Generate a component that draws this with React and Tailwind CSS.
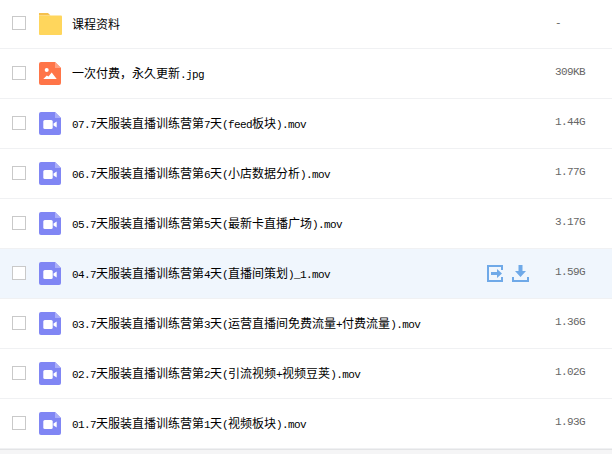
import React from "react";

const files = [
  { name: "课程资料", size: "-", type: "folder" },
  { name: "一次付费，永久更新.jpg", size: "309KB", type: "image" },
  { name: "07.7天服装直播训练营第7天(feed板块).mov", size: "1.44G", type: "video" },
  { name: "06.7天服装直播训练营第6天(小店数据分析).mov", size: "1.77G", type: "video" },
  { name: "05.7天服装直播训练营第5天(最新卡直播广场).mov", size: "3.17G", type: "video" },
  { name: "04.7天服装直播训练营第4天(直播间策划)_1.mov", size: "1.59G", type: "video", active: true },
  { name: "03.7天服装直播训练营第3天(运营直播间免费流量+付费流量).mov", size: "1.36G", type: "video" },
  { name: "02.7天服装直播训练营第2天(引流视频+视频豆荚).mov", size: "1.02G", type: "video" },
  { name: "01.7天服装直播训练营第1天(视频板块).mov", size: "1.93G", type: "video" },
];

function FileIcon({ type }) {
  if (type === "folder") {
    return (
      <svg width="24" height="24" viewBox="0 0 24 24" className="shrink-0">
        <path d="M1 1h9l2.500 2.500H1z" fill="#f5c04e" />
        <path d="M1 3.500h22a1 1 0 0 1 1 1V22a1 1 0 0 1-1 1H2a1 1 0 0 1-1-1z" fill="#ffd65c" />
      </svg>
    );
  }
  if (type === "image") {
    return (
      <svg width="24" height="25" viewBox="0 0 24 25" className="shrink-0">
        <path d="M3 1h14l6 6v15a2 2 0 0 1-2 2H3a2 2 0 0 1-2-2V3a2 2 0 0 1 2-2z" fill="#ff7548" />
        <path d="M17 1l6 6h-6z" fill="#ffa284" />
        <circle cx="8.700" cy="9" r="2" fill="#fff" />
        <path d="M5.300 18l3.500-3.500 1.700 1 3.200-4 5 6.500z" fill="#fff" />
      </svg>
    );
  }
  return (
    <svg width="24" height="25" viewBox="0 0 24 25" className="shrink-0">
      <path d="M3 1h14l6 6v15a2 2 0 0 1-2 2H3a2 2 0 0 1-2-2V3a2 2 0 0 1 2-2z" fill="#8086f4" />
      <path d="M17 1l6 6h-6z" fill="#a9adf8" />
      <rect x="5.300" y="9" width="9.400" height="9" rx="1.500" fill="#fff" />
      <path d="M15.500 12.500l3.200-2v6l-3.200-2z" fill="#fff" />
    </svg>
  );
}

function FileName({ text }) {
  // cjk at 12px, latin squeezed to half width like the original bitmap font
  const parts = text.match(/[\x00-\x7f]+|[^\x00-\x7f]+/g);
  return (
    <span className="text-xs text-black whitespace-pre font-['Noto_Sans_CJK_SC',sans-serif]">
      {parts.map((part, i) =>
        /^[\x00-\x7f]/.test(part) ? (
          <span key={i} className="text-[11px] tracking-[-0.6px] font-['Liberation_Mono',monospace]">{part}</span>
        ) : (
          <span key={i}>{part}</span>
        )
      )}
    </span>
  );
}

function RowActions() {
  return (
    <div className="flex items-center gap-[9px] mr-[26px]">
      <svg width="16" height="17" viewBox="0 0 16 17">
        <path d="M15 5V1H1v15h14v-4" fill="none" stroke="#6fa9e8" strokeWidth="2" />
        <path d="M4 7h6V4l5 4.500-5 4.500v-3H4z" fill="#6fa9e8" />
      </svg>
      <svg width="17" height="17" viewBox="0 0 17 17">
        <path d="M6.500 0h4v6h3.500l-5.500 6-5.500-6h3.500z" fill="#6fa9e8" />
        <path d="M1 12v4h15v-4" fill="none" stroke="#6fa9e8" strokeWidth="2" />
      </svg>
    </div>
  );
}

function FileRow({ file, first }) {
  return (
    <div
      className={`flex items-center border-b border-[#f0f1f3] pl-[12px] ${first ? "h-[49px]" : "h-[50px]"} ${
        file.active ? "bg-[#f0f6fd]" : "bg-white"
      }`}
    >
      <div className="w-[14px] h-[14px] mb-[2px] border border-[#c9c9c9] bg-white shrink-0" />
      <div className="ml-[12px] mr-[10px] flex shrink-0">
        <FileIcon type={file.type} />
      </div>
      <div className="flex-1 min-w-0 pb-[3px]">
        <FileName text={file.name} />
      </div>
      {file.active && <RowActions />}
      <div className="w-[57px] shrink-0 pb-[2px] text-[11px] tracking-[-0.6px] text-[#666] font-['Liberation_Mono',monospace]">{file.size}</div>
    </div>
  );
}

export default function App() {
  return (
    <div className="w-[612px] h-[454px] overflow-hidden bg-[#f5f5f6]">
      <div className="border-b border-[#e3e4e6]">
        {files.map((file, i) => (
          <FileRow key={file.name} file={file} first={i === 0} />
        ))}
      </div>
    </div>
  );
}
